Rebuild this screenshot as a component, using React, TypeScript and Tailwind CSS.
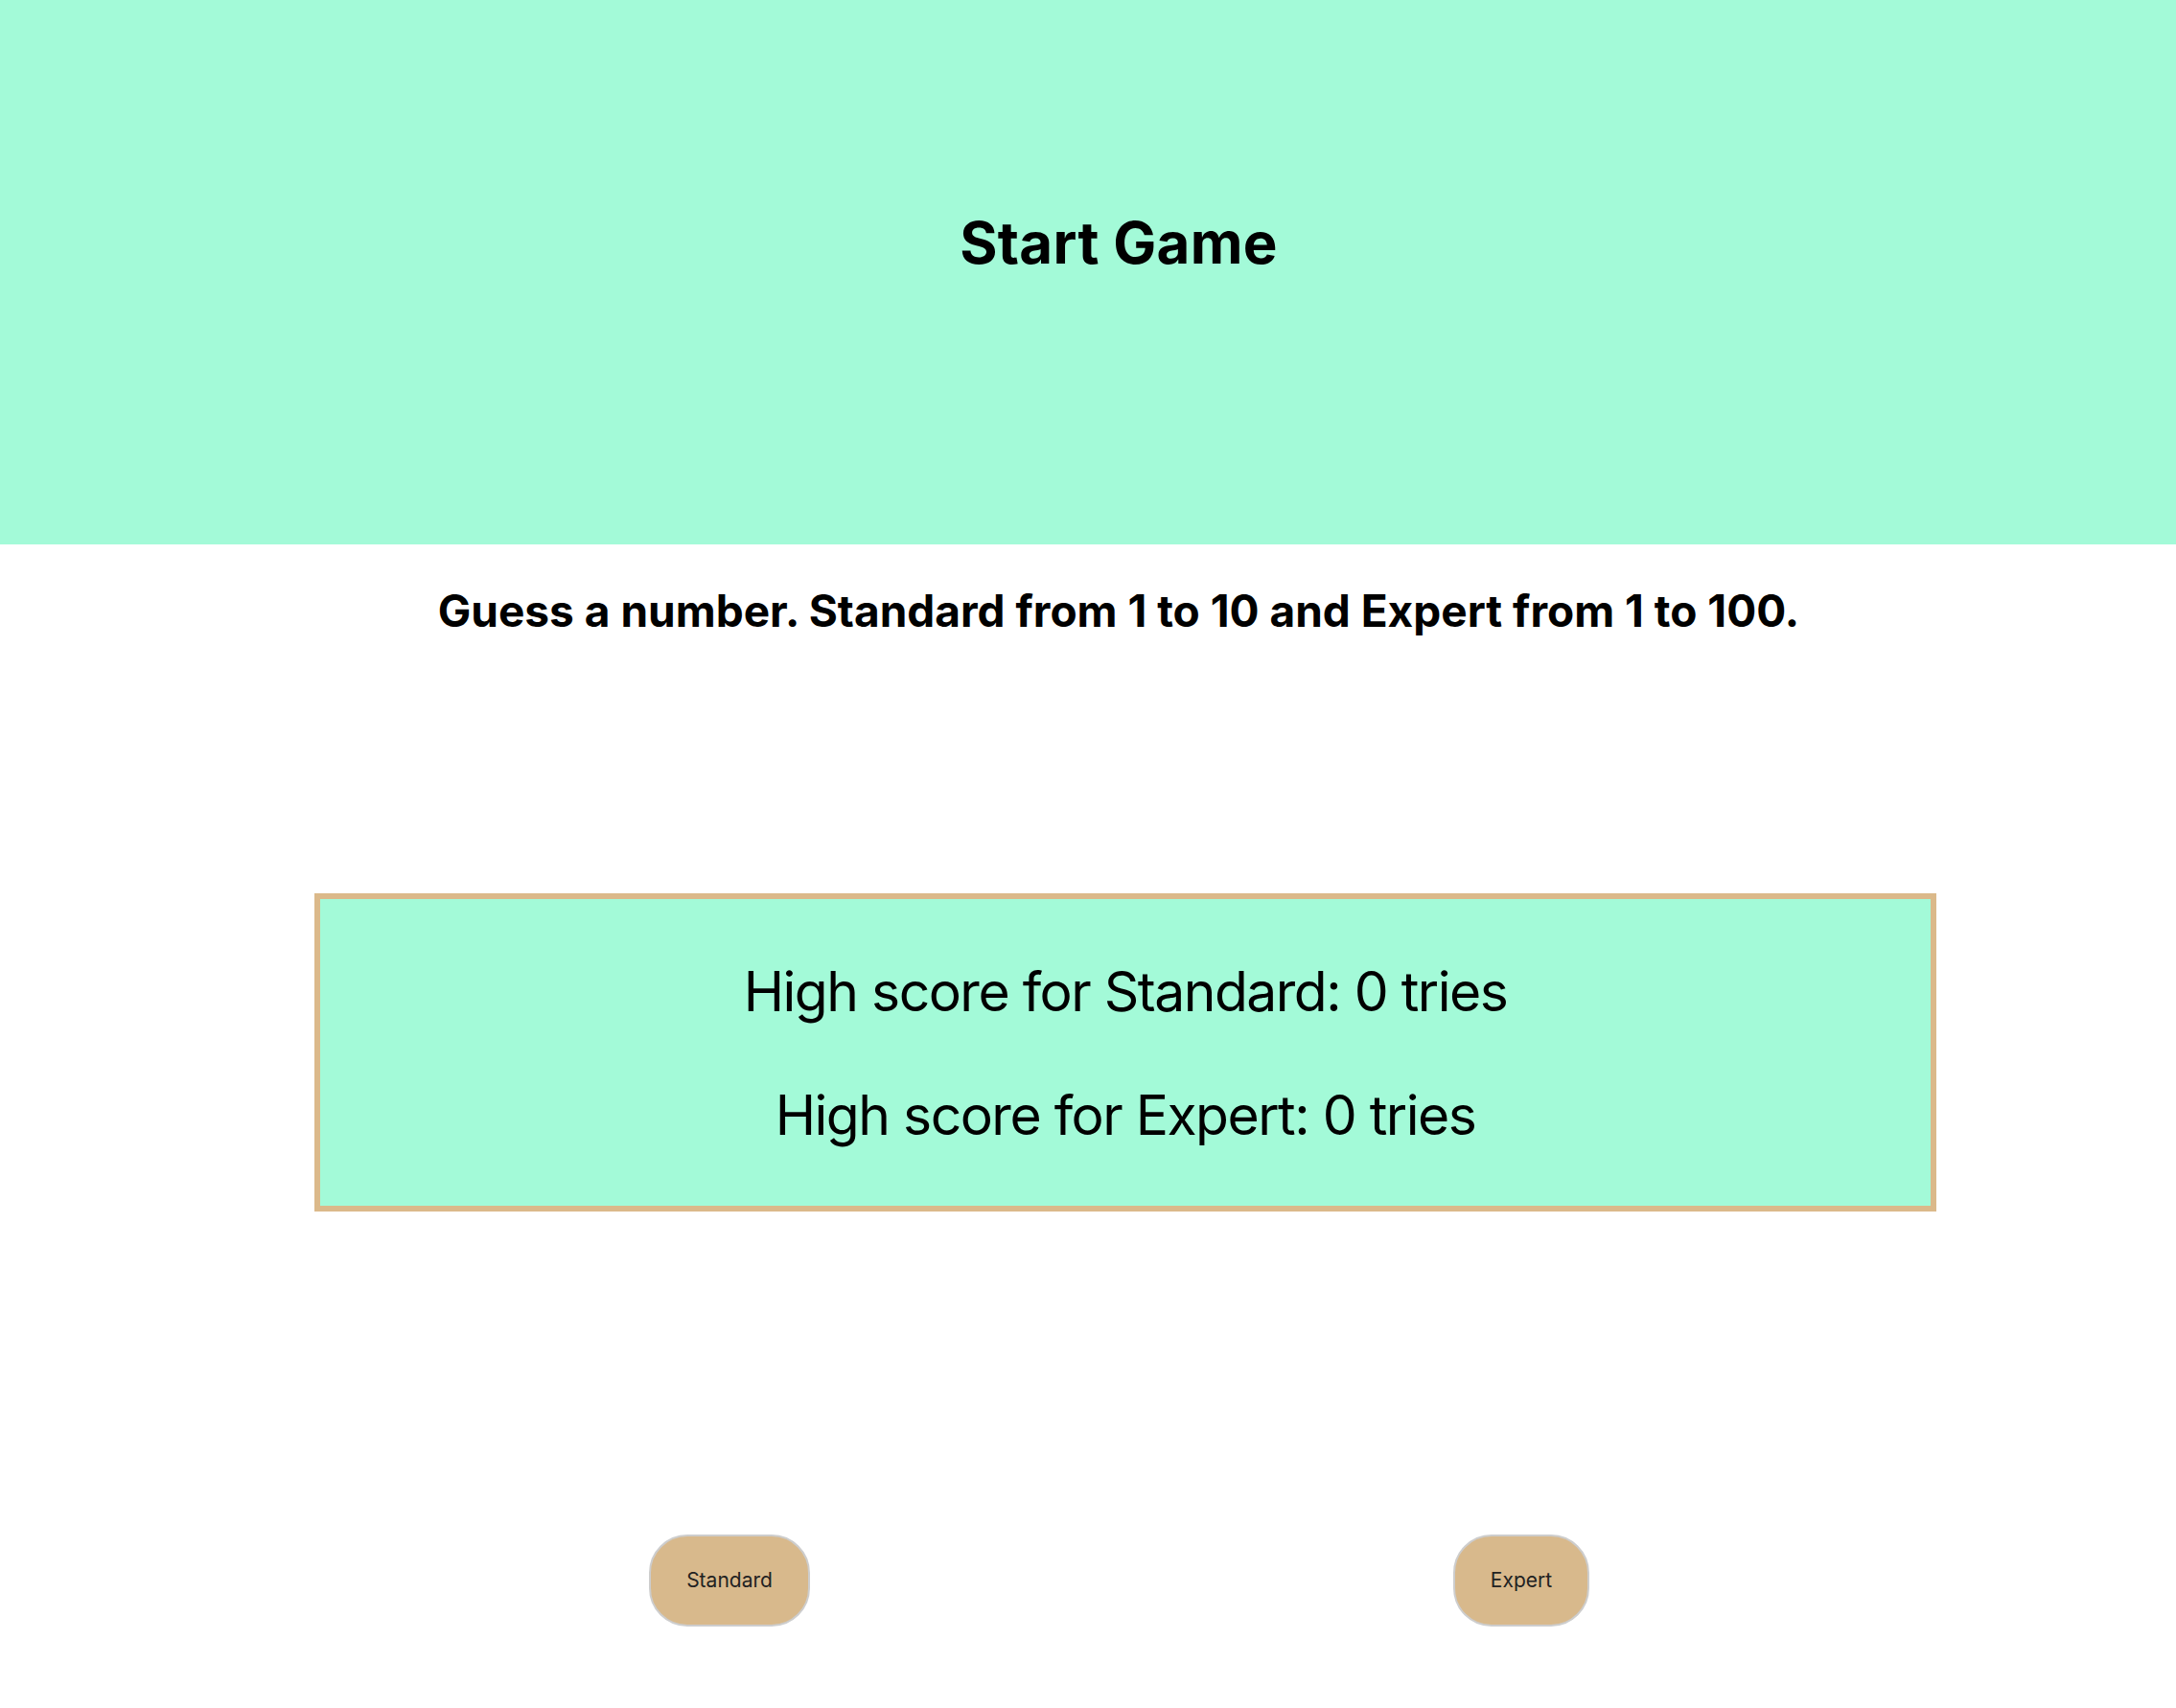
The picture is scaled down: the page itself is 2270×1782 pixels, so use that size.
export default function App() {
  return (
    <div className="min-h-[1782px] w-[2270px] bg-white text-black" style={{ fontFamily: "Inter, 'Noto Sans', sans-serif" }}>
      <div className="h-[568px] bg-[#a3fad8] pl-[64px] pt-[217px]">
        <h1 className="text-center text-[60px] font-bold leading-[1.2] tracking-[0.3px]">Start Game</h1>
      </div>
      <h2 className="mt-[42px] pl-[64px] text-center text-[46px] font-bold leading-[1.2]">
        Guess a number. Standard from 1 to 10 and Expert from 1 to 100.
      </h2>
      <div className="ml-[328px] mt-[267px] w-[1692px] border-[6px] border-[#dbb98a] bg-[#a3fad8] pt-[63px] pb-[60px]">
        <p className="text-center text-[57px] leading-[1.2] tracking-[-1.5px]">High score for Standard: 0 tries</p>
        <p className="mt-[60px] text-center text-[57px] leading-[1.2] tracking-[-1.5px]">High score for Expert: 0 tries</p>
      </div>
      <div className="ml-[348px] mt-[337px] grid w-[1652px] grid-cols-2">
        <div className="flex justify-center">
          <button className="h-[96px] rounded-[40px] border-2 border-[#cdcdcd] bg-[#d8b98c] px-[37px] text-[21px] text-[#222]">
            Standard
          </button>
        </div>
        <div className="flex justify-center">
          <button className="h-[96px] rounded-[40px] border-2 border-[#cdcdcd] bg-[#d8b98c] px-[37px] text-[21px] text-[#222]">
            Expert
          </button>
        </div>
      </div>
    </div>
  );
}
